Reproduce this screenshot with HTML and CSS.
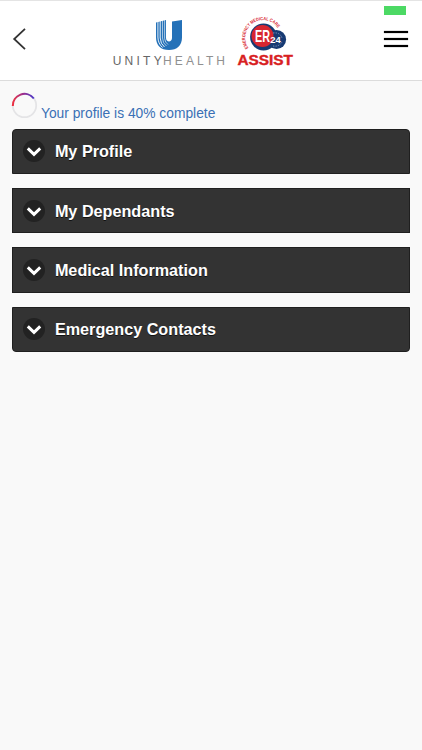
FILE: index.html
```html
<!DOCTYPE html>
<html lang="en">
<head>
    <meta charset="UTF-8">
    <meta name="viewport" content="width=device-width, initial-scale=1.0">
    <title>My Profile</title>
    <link rel="stylesheet" href="styles.css">
</head>
<body>
    <header class="header">
        <a href="#" class="back" aria-label="Back">
            <svg width="14" height="24" viewBox="0 0 14 24">
                <path d="M13 1.8 L2.2 12 L13 22.2" fill="none" stroke="#333" stroke-width="1.8"/>
            </svg>
        </a>
        <div class="logos">
            <svg class="unity" width="116" height="54" viewBox="0 0 116 54">
                <path d="M44 6.5 L54 4 V22 C54 26.5 60 26.5 60 22 V5.5 L70 4 V21.5 C70 29.5 65 34 57 34 C49 34 44 29.5 44 21.5 Z" fill="#2471b8"/>
                <path d="M45.9 5 V21 Q46 27.5 50.5 31.5 M48.2 5 V22 Q48.5 28 52.5 31" fill="none" stroke="#fff" stroke-width="0.9"/>
                <path d="M50.5 4 V22 Q50.8 27.5 54.5 30 M52.6 4 V22.5 Q53 26.5 56 28.5" fill="none" stroke="#fff" stroke-width="0.6"/>
                <text x="0.7" y="49" class="unity-text" textLength="49">UNITY</text>
                <text x="51" y="49" class="unity-text light" textLength="62">HEALTH</text>
            </svg>
            <svg class="er24" width="60" height="54" viewBox="0 0 60 54">
                <defs>
                    <path id="arc" d="M12.5 32 A15.4 15.4 0 1 1 41.5 11.5"/>
                </defs>
                <text class="arc-text"><textPath href="#arc" textLength="56" lengthAdjust="spacingAndGlyphs">EMERGENCY MEDICAL CARE</textPath></text>
                <circle cx="27.5" cy="21" r="13.4" fill="#173a73"/>
                <circle cx="40.5" cy="23.5" r="9.6" fill="#173a73"/>
                <circle cx="26.5" cy="20" r="11" fill="#d8262f"/>
                <path d="M37 17 Q44 16 46 22 M37 30 Q43 31 46 26" fill="none" stroke="#8fa3c8" stroke-width="0.9" stroke-dasharray="1.2 1.2"/>
                <text x="19" y="26" class="er-text" textLength="15" lengthAdjust="spacingAndGlyphs">ER</text>
                <text x="34.2" y="27.3" class="num-text" textLength="10.5" lengthAdjust="spacingAndGlyphs">24</text>
                <text x="1.5" y="49.3" class="assist-text" textLength="55.5" lengthAdjust="spacingAndGlyphs">ASSIST</text>
            </svg>
        </div>
        <div class="right">
            <span class="battery"></span>
            <div class="menu">
                <span></span>
                <span></span>
                <span></span>
            </div>
        </div>
    </header>

    <div class="content">
        <div class="progress">
            <svg width="28" height="28" viewBox="0 0 28 28">
                <defs>
                    <linearGradient id="ring">
                        <stop offset="0" stop-color="#ee3040"/>
                        <stop offset="0.5" stop-color="#9a2f90"/>
                        <stop offset="1" stop-color="#4a35c8"/>
                    </linearGradient>
                </defs>
                <circle cx="13.5" cy="14.5" r="11.7" fill="none" stroke="#e4e4e6" stroke-width="1.8"/>
                <path d="M1.8 15 A11.7 11.7 0 0 1 22.8 7.5" fill="none" stroke="url(#ring)" stroke-width="2"/>
            </svg>
            <span>Your profile is 40% complete</span>
        </div>

        <div class="accordion">
            <div class="item">
                <svg class="icon" viewBox="0 0 22 22"><circle cx="11" cy="11" r="11"/><path d="M4.8 8.4 L11 14.4 L17.2 8.4"/></svg>
                <span>My Profile</span>
            </div>
            <div class="item">
                <svg class="icon" viewBox="0 0 22 22"><circle cx="11" cy="11" r="11"/><path d="M4.8 8.4 L11 14.4 L17.2 8.4"/></svg>
                <span>My Dependants</span>
            </div>
            <div class="item">
                <svg class="icon" viewBox="0 0 22 22"><circle cx="11" cy="11" r="11"/><path d="M4.8 8.4 L11 14.4 L17.2 8.4"/></svg>
                <span>Medical Information</span>
            </div>
            <div class="item">
                <svg class="icon" viewBox="0 0 22 22"><circle cx="11" cy="11" r="11"/><path d="M4.8 8.4 L11 14.4 L17.2 8.4"/></svg>
                <span>Emergency Contacts</span>
            </div>
        </div>
    </div>
</body>
</html>
```
FILE: styles.css
```css
* {
    box-sizing: border-box;
}
body {
    margin: 0;
    min-height: 750px;
    background-color: #f9f9f9;
    font-family: "Liberation Sans", Arial, sans-serif;
    color: #333;
}
svg {
    display: block;
    overflow: visible;
}
.header {
    display: flex;
    height: 81px;
    padding: 0 14px 0 12px;
    background-color: #fff;
    border-top: 1px solid #e4e4e4;
    border-bottom: 1px solid #dcdcdc;
}
.back {
    padding-top: 26px;
}
.logos {
    display: flex;
    gap: 8px;
    margin-left: 86px;
    padding-top: 15px;
}
.unity-text {
    font-size: 12px;
    fill: #666;
}
.unity-text.light {
    fill: #909090;
}
.arc-text {
    font-size: 4.6px;
    font-weight: bold;
    fill: #d8262f;
}
.er-text {
    font-size: 17px;
    font-weight: bold;
    fill: #fff;
}
.num-text {
    font-size: 9.5px;
    font-weight: bold;
    fill: #fff;
}
.assist-text {
    font-size: 14px;
    font-weight: bold;
    fill: #d8201f;
    stroke: #d8201f;
    stroke-width: 0.4px;
}
.right {
    margin-left: auto;
    padding-top: 5px;
}
.battery {
    display: block;
    width: 22px;
    height: 9px;
    background-color: #4cd964;
}
.menu {
    display: flex;
    flex-direction: column;
    gap: 5px;
    width: 24px;
    margin-top: 16px;
}
.menu span {
    height: 2px;
    background-color: #000;
    box-shadow: 0 0 1px #000;
}
.content {
    padding: 10px 12.4px;
}
.progress {
    display: flex;
    align-items: flex-end;
    height: 32px;
    margin-left: -1px;
    font-size: 13.8px;
    color: #3a70b5;
}
.progress svg {
    align-self: flex-start;
}
.progress span {
    margin-left: 1.6px;
    line-height: 18px;
}
.accordion {
    display: flex;
    flex-direction: column;
    gap: 14px;
    margin-top: 5.6px;
}
.item {
    display: flex;
    align-items: center;
    height: 45.4px;
    padding-left: 9.5px;
    border: 1px solid #1f1f1f;
    background-color: #333;
    color: #fff;
    font-size: 16.2px;
    font-weight: bold;
    text-shadow: 0 1px 0 #111;
}
.item span {
    padding-top: 1px;
}
.item:first-child {
    border-radius: 4px 4px 0 0;
}
.item:last-child {
    border-radius: 0 0 4px 4px;
}
.icon {
    width: 22px;
    height: 22px;
    margin-right: 10px;
}
.icon circle {
    fill: #222;
}
.icon path {
    fill: none;
    stroke: #fff;
    stroke-width: 3px;
}
```
